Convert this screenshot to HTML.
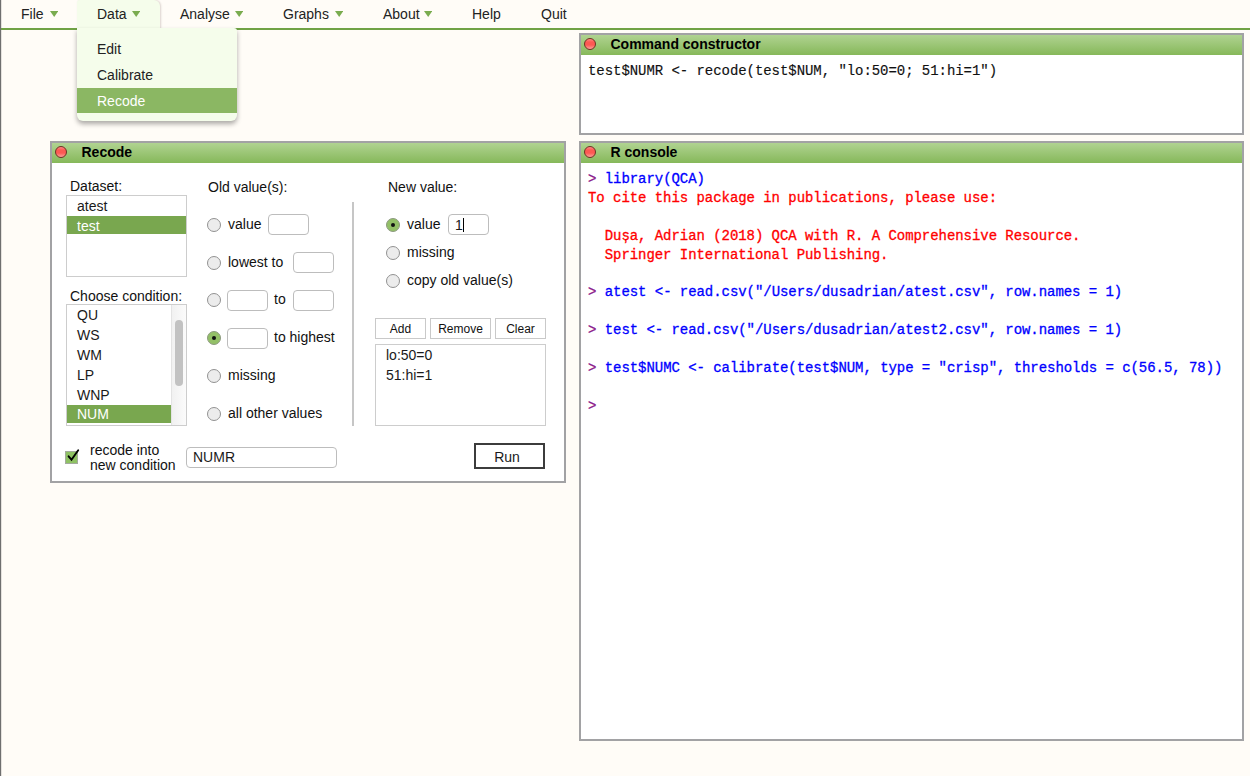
<!DOCTYPE html>
<html>
<head>
<meta charset="utf-8">
<title>QCA GUI</title>
<style>
html,body{margin:0;padding:0;}
body{width:1250px;height:776px;overflow:hidden;background:#fffcf7;font-family:"Liberation Sans",sans-serif;font-size:14px;color:#1a1a1a;position:relative;}
.abs{position:absolute;}
#leftedge{left:0;top:0;width:1px;height:776px;background:#6f6f6f;box-shadow:1px 0 0 #e4e1dd;}
#menuline{left:1px;top:28px;width:1249px;height:2px;background:#70a245;}
.mi{position:absolute;top:6px;font-size:14px;line-height:16px;white-space:nowrap;color:#222;}
.tri{position:absolute;top:10.9px;width:8.4px;height:6px;}
#datatab{left:77px;top:0;width:83px;height:29px;background:#f5fdeb;border-radius:3px 6px 0 0;box-shadow:1px 0 2px rgba(60,30,30,0.18);}
#dropdown{left:77px;top:28px;width:160px;height:93px;background:#f5fdeb;border-radius:0 3px 6px 6px;box-shadow:0 3px 5px rgba(0,0,0,0.33);}
.ddi{position:absolute;left:0;width:160px;height:26px;line-height:26px;text-indent:20px;font-size:14px;color:#222;}
.ddi.sel{background:#8bb763;color:#fff;height:25px;line-height:26px;}
.panel{position:absolute;box-sizing:border-box;border:2px solid #a2a2a4;background:#fff;}
.ptitle{position:absolute;left:0;top:0;right:0;height:20px;background:linear-gradient(#b0d391,#86b85a);font-weight:bold;font-size:14px;line-height:20px;color:#000;}
.ptitle span{position:absolute;left:29.5px;top:-1.5px;}
.dot{position:absolute;left:3px;top:3px;width:12px;height:12px;box-sizing:border-box;border-radius:50%;border:1px solid #6e2f22;background:linear-gradient(#ff8a84 0,#fd5953 30%,#fd5953 60%,#ffa09b 100%);}
.mono{font-family:"Liberation Mono",monospace;font-size:14px;line-height:18.9px;white-space:pre;letter-spacing:-0.055px;-webkit-text-stroke:0.3px;}
.lbl{position:absolute;white-space:nowrap;font-size:14px;line-height:16px;color:#111;}
.listbox{position:absolute;box-sizing:border-box;border:1px solid #cdcdcd;background:#fff;}
.li{position:absolute;left:0;right:0;height:19px;line-height:19px;text-indent:10px;font-size:14px;white-space:nowrap;}
.li.sel{background:#79a74f;color:#fff;}
.radio{position:absolute;width:14px;height:14px;border-radius:50%;border:1px solid #929292;background:#ececec;box-sizing:border-box;}
.radio.on{background:#93c067;border-color:#8d9a80;}
.radio.on:after{content:"";position:absolute;left:4px;top:4px;width:4px;height:4px;border-radius:50%;background:#111;}
.inp{position:absolute;box-sizing:border-box;border:1px solid #bdbdbd;border-radius:4px;background:#fff;height:21px;margin-top:0.4px;}
.btn{position:absolute;box-sizing:border-box;border:1px solid #c9c9c9;background:#fff;font-size:12px;line-height:20.5px;text-align:center;height:21px;color:#111;}
</style>
</head>
<body>
<div class="abs" id="leftedge"></div>
<div class="abs" id="menuline"></div>
<div class="abs" id="datatab"></div>
<div class="mi" style="left:21px">File</div><svg class="tri" style="left:50.0px" viewBox="0 0 8.4 6"><polygon points="0,0 8.4,0 4.2,6" fill="#7aac4f"/></svg>
<div class="mi" style="left:97px">Data</div><svg class="tri" style="left:132.0px" viewBox="0 0 8.4 6"><polygon points="0,0 8.4,0 4.2,6" fill="#7aac4f"/></svg>
<div class="mi" style="left:180px">Analyse</div><svg class="tri" style="left:235.0px" viewBox="0 0 8.4 6"><polygon points="0,0 8.4,0 4.2,6" fill="#7aac4f"/></svg>
<div class="mi" style="left:283px">Graphs</div><svg class="tri" style="left:335.0px" viewBox="0 0 8.4 6"><polygon points="0,0 8.4,0 4.2,6" fill="#7aac4f"/></svg>
<div class="mi" style="left:383px">About</div><svg class="tri" style="left:424.0px" viewBox="0 0 8.4 6"><polygon points="0,0 8.4,0 4.2,6" fill="#7aac4f"/></svg>
<div class="mi" style="left:472px">Help</div>
<div class="mi" style="left:541px">Quit</div>

<div class="abs" id="dropdown">
  <div class="ddi" style="top:8px">Edit</div>
  <div class="ddi" style="top:34px">Calibrate</div>
  <div class="ddi sel" style="top:60px">Recode</div>
</div>

<!-- Command constructor -->
<div class="panel" style="left:579px;top:33px;width:665px;height:102px;">
  <div class="ptitle"><div class="dot"></div><span>Command constructor</span></div>
  <div class="mono abs" style="left:7px;top:27px;color:#111;-webkit-text-stroke:0.15px;">test$NUMR &lt;- recode(test$NUM, "lo:50=0; 51:hi=1")</div>
</div>

<!-- R console -->
<div class="panel" style="left:579px;top:141px;width:665px;height:600px;">
  <div class="ptitle"><div class="dot"></div><span>R console</span></div>
  <div class="mono abs" style="left:7px;top:27px;color:#0000ff;"><span style="color:#8b1a8b">&gt;</span> library(QCA)
<span style="color:#ff0000">To cite this package in publications, please use:

  Dușa, Adrian (2018) QCA with R. A Comprehensive Resource.
  Springer International Publishing.</span>

<span style="color:#8b1a8b">&gt;</span> atest &lt;- read.csv("/Users/dusadrian/atest.csv", row.names = 1)

<span style="color:#8b1a8b">&gt;</span> test &lt;- read.csv("/Users/dusadrian/atest2.csv", row.names = 1)

<span style="color:#8b1a8b">&gt;</span> test$NUMC &lt;- calibrate(test$NUM, type = "crisp", thresholds = c(56.5, 78))

<span style="color:#8b1a8b">&gt;</span> </div>
</div>

<!-- Recode dialog -->
<div class="panel" id="recode" style="left:50px;top:141px;width:516px;height:342px;">
  <div class="ptitle"><div class="dot"></div><span>Recode</span></div>
</div>
<div id="rc" class="abs" style="left:0;top:0;">
  <div class="lbl" style="left:70px;top:178px">Dataset:</div>
  <div class="listbox" style="left:66px;top:195px;width:121px;height:82px;">
    <div class="li" style="top:1px">atest</div>
    <div class="li sel" style="top:19.8px;height:18.5px;line-height:20px">test</div>
  </div>
  <div class="lbl" style="left:70px;top:288px">Choose condition:</div>
  <div class="listbox" style="left:66px;top:304px;width:121px;height:122px;overflow:hidden;">
    <div class="li" style="top:1px;right:15px">QU</div>
    <div class="li" style="top:20.9px;right:15px">WS</div>
    <div class="li" style="top:40.8px;right:15px">WM</div>
    <div class="li" style="top:60.7px;right:15px">LP</div>
    <div class="li" style="top:80.6px;right:15px">WNP</div>
    <div class="li sel" style="top:100.3px;right:15px;height:18.2px;line-height:19px">NUM</div>
    <div class="abs" style="left:104px;top:0;width:15px;height:122px;background:linear-gradient(to right,#f1f1f1,#fbfbfb);border-left:1px solid #e3e3e3;box-sizing:border-box"></div>
    <div class="abs" style="left:108.3px;top:15px;width:7.7px;height:65.5px;border-radius:4px;background:#c2c2c2"></div>
  </div>

  <div class="lbl" style="left:208px;top:179px">Old value(s):</div>
  <div class="radio" style="left:207px;top:218px"></div>
  <div class="lbl" style="left:228px;top:216px">value</div>
  <div class="inp" style="left:268px;top:214px;width:41px"></div>

  <div class="radio" style="left:207px;top:256px"></div>
  <div class="lbl" style="left:228px;top:254px">lowest to</div>
  <div class="inp" style="left:293px;top:252px;width:41px"></div>

  <div class="radio" style="left:207px;top:293px"></div>
  <div class="inp" style="left:227px;top:290px;width:41px"></div>
  <div class="lbl" style="left:274px;top:291px">to</div>
  <div class="inp" style="left:293px;top:290px;width:41px"></div>

  <div class="radio on" style="left:207px;top:331px"></div>
  <div class="inp" style="left:227px;top:328px;width:41px"></div>
  <div class="lbl" style="left:274px;top:329px">to highest</div>

  <div class="radio" style="left:207px;top:369px"></div>
  <div class="lbl" style="left:228px;top:367px">missing</div>

  <div class="radio" style="left:207px;top:407px"></div>
  <div class="lbl" style="left:228px;top:405px">all other values</div>

  <div class="abs" style="left:352px;top:202px;width:2px;height:224px;background:#c6c6c6"></div>

  <div class="lbl" style="left:388px;top:179px">New value:</div>
  <div class="radio on" style="left:386px;top:218px"></div>
  <div class="lbl" style="left:407px;top:216px">value</div>
  <div class="inp" style="left:448px;top:214px;width:41px"><span class="abs" style="left:6px;top:2px;font-size:14px;line-height:16px;">1</span><span class="abs" style="left:13.5px;top:3px;width:1px;height:14px;background:#000"></span></div>
  <div class="radio" style="left:386px;top:246px"></div>
  <div class="lbl" style="left:407px;top:244px">missing</div>
  <div class="radio" style="left:386px;top:274px"></div>
  <div class="lbl" style="left:407px;top:272px">copy old value(s)</div>

  <div class="btn" style="left:375px;top:318px;width:51px">Add</div>
  <div class="btn" style="left:430px;top:318px;width:61px">Remove</div>
  <div class="btn" style="left:495px;top:318px;width:51px">Clear</div>
  <div class="listbox" style="left:375px;top:344px;width:171px;height:82px;">
    <div class="abs" style="left:10px;top:2px;font-size:14px;line-height:16px">lo:50=0</div>
    <div class="abs" style="left:10px;top:21.6px;font-size:14px;line-height:16px">51:hi=1</div>
  </div>

  <div class="abs" style="left:65.3px;top:451.2px;width:12.6px;height:12.6px;background:#8fc264;border:1px solid #a3ab9d;box-sizing:border-box"></div>
  <svg class="abs" style="left:60px;top:440px" width="30" height="30" viewBox="60 440 30 30"><polyline points="68.6,456.3 71.5,459.7 78.2,450.2" fill="none" stroke="#000" stroke-width="1.9" stroke-linecap="round" stroke-linejoin="miter"/></svg>
  <div class="lbl" style="left:90px;top:443px;line-height:15px">recode into<br>new condition</div>
  <div class="inp" style="left:186px;top:447px;width:151px;"><span class="abs" style="left:6px;top:0.5px;font-size:14px;line-height:16px;">NUMR</span></div>
  <div class="abs" style="left:474px;top:443px;width:71px;height:26px;box-sizing:border-box;border:2px solid #3c3c3c;background:#fff;text-align:center;font-size:14px;line-height:24px;padding-right:5px;">Run</div>
</div>
</body>
</html>
